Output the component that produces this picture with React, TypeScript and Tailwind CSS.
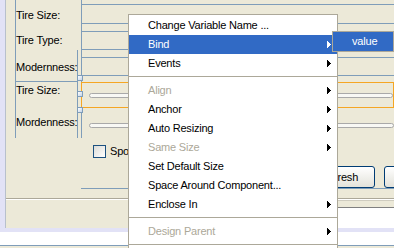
import React from 'react';

type Item = { label: string; arrow?: boolean; active?: boolean; disabled?: boolean } | 'sep';

const items: Item[] = [
  { label: 'Change Variable Name ...' },
  { label: 'Bind', arrow: true, active: true },
  { label: 'Events', arrow: true },
  'sep',
  { label: 'Align', arrow: true, disabled: true },
  { label: 'Anchor', arrow: true },
  { label: 'Auto Resizing', arrow: true },
  { label: 'Same Size', arrow: true, disabled: true },
  { label: 'Set Default Size' },
  { label: 'Space Around Component...' },
  { label: 'Enclose In', arrow: true },
  'sep',
  { label: 'Design Parent', arrow: true, disabled: true },
  'sep',
];

const Arrow = ({ white }: { white?: boolean }) => (
  <svg width="4" height="7" viewBox="0 0 4 7" shapeRendering="crispEdges">
    <path d="M0 0h1v1h1v1h1v1h1v1h-1v1h-1v1h-1v1h-1z" fill={white ? '#ffffff' : '#000000'} />
  </svg>
);

const Handle = ({ top }: { top: string }) => (
  <div className={`absolute left-[61px] ${top} w-[6px] h-[6px] border border-[#7F9DB9] bg-gradient-to-br from-white to-[#C3D3E8]`} />
);

const Slider = () => (
  <div className="h-[5px] rounded-full border border-[#A9A9A9] bg-[#F8F8F4]" />
);

export default function App() {
  return (
    <div className="relative w-[394px] h-[248px] overflow-hidden bg-[#ECE9D8] font-['Liberation_Sans',Arial,sans-serif] text-[11px] leading-[13px] tracking-[-0.2px] text-black">
      {/* designer surface */}
      <div className="h-[232px] bg-[#E2E2F6] pl-[5px] pb-[4px]">
        <div className="h-[228px] border-l border-[#B8C0CC] bg-[#ECE9D8] flex flex-col">
          <div className="h-[198px] flex flex-col">
            {/* form grid */}
            <div className="relative ml-[9px] h-[138px] flex border-l border-[#7F9DB9]">
              <div className="w-[62px] flex flex-col">
                <div className="h-[30px] flex items-center">Tire Size:</div>
                <div className="h-[20px] flex items-center">Tire Type:</div>
                <div className="h-[32px] pt-[3px] flex items-center border-r border-b border-[#7F9DB9]">Modernness:</div>
                <div className="flex-1 border-r border-[#7F9DB9] flex flex-col">
                  <div className="h-[14px] flex items-center mt-[1px]">Tire Size:</div>
                  <div className="h-[14px] flex items-center mt-[18px]">Mordenness:</div>
                </div>
              </div>
              <div className="w-[3px]" />
              <div className="flex-1 border-l border-[#7F9DB9] flex flex-col">
                <div className="mt-[4px] h-[20px] border-y border-[#7F9DB9]" />
                <div className="mt-[7px] h-[19px] border-y border-[#7F9DB9]" />
                <div className="mt-[7px] h-[19px] border-y border-[#7F9DB9]" />
                <div className="mt-[6px] -ml-px h-[26px] border border-[#F5A623] pl-[7px] pt-[10px]">
                  <Slider />
                </div>
                <div className="mt-[15px] pl-[7px]">
                  <Slider />
                </div>
              </div>
              <Handle top="top-[75px]" />
              <Handle top="top-[91px]" />
              <Handle top="top-[107px]" />
            </div>
            <div className="mt-[7px] pl-[87px] flex items-center gap-[4px] h-[13px]">
              <div className="w-[13px] h-[13px] border border-[#1C5180] bg-gradient-to-br from-[#DCDCD7] to-white" />
              <span>Sport</span>
            </div>
            <div className="mt-[8px] pl-[298px] flex gap-[9px]">
              <div className="w-[71px] h-[22px] shrink-0 rounded-[3px] border border-[#003C74] bg-gradient-to-b from-white to-[#E3E2DA] flex items-center justify-center">
                Refresh
              </div>
              <div className="w-[75px] h-[22px] shrink-0 rounded-[3px] border border-[#003C74] bg-gradient-to-b from-white to-[#E3E2DA]" />
            </div>
            <div className="ml-[75px] h-px bg-[#7F9DB9]" />
          </div>
          <div className="h-px bg-[#ACA899]" />
          <div className="h-px bg-white" />
          <div className="flex-1 flex">
            <div className="w-[200px]" />
            <div className="flex-1 flex flex-col border-t border-[#CFCCBF]">
              <div className="h-[6px]" />
              <div className="flex-1 border-t border-[#808080] bg-white" />
            </div>
          </div>
        </div>
      </div>
      <div className="h-[13px] bg-white" />
      <div className="h-px bg-[#7F9DB9]" />

      {/* context menu */}
      <div className="absolute left-[128px] top-[14px] h-[240px] w-[210px] border border-[#ACA899] bg-white pt-px">
        {items.map((it, i) =>
          it === 'sep' ? (
            <div key={i} className="h-[8px] pt-[3px]">
              <div className="h-px bg-[#ACA899]" />
            </div>
          ) : (
            <div
              key={i}
              className={`h-[19px] flex items-center justify-between pl-[19px] pr-[6px] ${
                it.active ? 'bg-[#316AC5] text-white' : it.disabled ? 'text-[#ACA899]' : 'text-black'
              }`}
            >
              <span className="whitespace-nowrap">{it.label}</span>
              {it.arrow && <Arrow white={it.active} />}
            </div>
          )
        )}
      </div>

      {/* submenu */}
      <div className="absolute left-[332px] top-[31px] w-[62px] h-[21px] border border-[#ACA899] bg-[#316AC5] text-white flex items-center pl-[19px]">
        value
      </div>
    </div>
  );
}
